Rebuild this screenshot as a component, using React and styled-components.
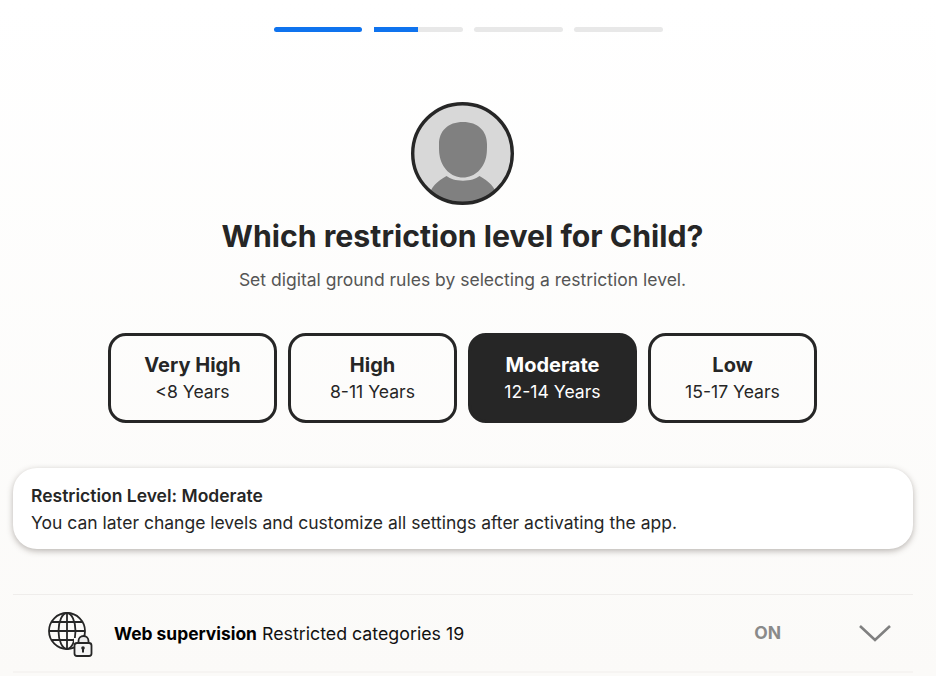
import React from "react"
import styled, { createGlobalStyle } from "styled-components"

const GlobalStyle = createGlobalStyle`
  html, body {
    margin: 0;
    padding: 0;
    height: 100%;
    overflow: hidden;
    font-family: Inter, "Liberation Sans", sans-serif;
  }
  #root { height: 100%; }
`

const levels = [
  { name: "Very High", age: "<8 Years" },
  { name: "High", age: "8-11 Years" },
  { name: "Moderate", age: "12-14 Years", active: true },
  { name: "Low", age: "15-17 Years" },
]

const AvatarIcon = () => (
  <svg width="103" height="103" viewBox="0 0 103 103">
    <defs>
      <clipPath id="avatar-clip">
        <circle cx="51.5" cy="51.5" r="49.5" />
      </clipPath>
    </defs>
    <circle cx="51.5" cy="51.5" r="50" fill="#d8d8d8" />
    <g clipPath="url(#avatar-clip)" fill="#808080">
      <path d="M52 20C67 20 76 29 76 42c0 5 0 8-.5 11C73.500 66 64 75.500 52 75.500S30.500 66 28.500 53c-.5-3-.5-6-.5-11C28 29 37 20 52 20z" />
      <path d="M16 103c1.500-9 3.500-16 8-20.500 3-3 7-6 11.500-8.500 4 2.800 9 4.700 16.500 4.700S64.500 76.800 68.500 74c4.500 2.500 8.500 5.500 11.500 8.500 4.500 4.500 6.500 11.500 8 20.500z" />
    </g>
    <circle cx="51.5" cy="51.5" r="49.800" fill="none" stroke="#262626" strokeWidth="3.400" />
  </svg>
)

const GlobeLockIcon = () => (
  <svg width="46" height="46" viewBox="0 0 46 46" fill="none">
    <g stroke="#262626" strokeWidth="1.800">
      <circle cx="19" cy="19" r="18" />
      <ellipse cx="19" cy="19" rx="8.500" ry="18" />
      <path d="M19 1v36M1 19h36M4 10h30M4 28h30" />
    </g>
    <path d="M26 26h18v19H26z" fill="#fbfaf8" />
    <path d="M30.500 32v-3a5 5 0 0 1 10 0v3" stroke="#262626" strokeWidth="1.800" fill="#ececec" />
    <rect x="26.500" y="31" width="17" height="13" rx="2.500" fill="#f4f4f4" stroke="#262626" strokeWidth="1.800" />
    <circle cx="35" cy="36" r="1.800" fill="#262626" />
    <rect x="34" y="36.500" width="2" height="4" fill="#262626" />
  </svg>
)

const App = () => (
  <Page>
    <GlobalStyle />
    <Progress>
      <Bar $fill={100} />
      <Bar $fill={49.4} $openStart />
      <Bar $fill={0} />
      <Bar $fill={0} />
    </Progress>

    <Avatar><AvatarIcon /></Avatar>
    <Title>Which restriction level for Child?</Title>
    <Subtitle>Set digital ground rules by selecting a restriction level.</Subtitle>

    <Levels>
      {levels.map((l) => (
        <LevelCard key={l.name} $active={l.active}>
          <LevelName>{l.name}</LevelName>
          <LevelAge>{l.age}</LevelAge>
        </LevelCard>
      ))}
    </Levels>

    <Notice>
      <NoticeTitle>Restriction Level: Moderate</NoticeTitle>
      <NoticeText>You can later change levels and customize all settings after activating the app.</NoticeText>
    </Notice>

    <Row>
      <RowIcon><GlobeLockIcon /></RowIcon>
      <RowName>Web supervision</RowName>
      <RowDetail>Restricted categories 19</RowDetail>
      <Status>ON</Status>
      <Chevron>
        <svg width="34" height="20" viewBox="0 0 34 20" fill="none">
          <path d="M2 3l15 14L32 3" stroke="#808080" strokeWidth="2.600" />
        </svg>
      </Chevron>
    </Row>
  </Page>
)

export default App

const Page = styled.div`
  height: 676px;
  width: 936px;
  box-sizing: border-box;
  padding: 27px 24px 0 13px;
  display: flex;
  flex-direction: column;
  align-items: center;
  background: linear-gradient(180deg, #ffffff 0%, #fbfaf8 100%);
  color: #262626;
  overflow: hidden;
`

const Progress = styled.div`
  display: flex;
  gap: 11px;
  margin-left: 12px;
`

const Bar = styled.div`
  width: 89px;
  height: 5px;
  border-radius: ${(p) => (p.$openStart ? "0 3px 3px 0" : "3px")};
  background: ${(p) =>
    `linear-gradient(90deg, #0f73ee ${p.$fill}%, #e8e8e8 ${p.$fill}%)`};

  &:first-child {
    width: 88px;
    margin-right: 1px;
  }
`

const Avatar = styled.div`
  width: 103px;
  height: 103px;
  margin-top: 70px;
`

const Title = styled.h1`
  margin: 11px 0 0;
  font-size: 30.25px;
  line-height: 40px;
  font-weight: 700;
  color: #262626;
`

const Subtitle = styled.p`
  margin: 12px 0 0;
  font-size: 17.5px;
  line-height: 24px;
  color: #555555;
`

const Levels = styled.div`
  display: flex;
  gap: 11px;
  margin-top: 41px;
`

const LevelCard = styled.div`
  box-sizing: border-box;
  width: 169px;
  height: 90px;
  border: 3px solid #262626;
  border-radius: 18px;
  display: flex;
  flex-direction: column;
  align-items: center;
  justify-content: center;
  background: ${(p) => (p.$active ? "#262626" : "transparent")};
  color: ${(p) => (p.$active ? "#ffffff" : "#262626")};
`

const LevelName = styled.div`
  font-size: 20px;
  line-height: 28px;
  font-weight: 700;
`

const LevelAge = styled.div`
  font-size: 17.6px;
  line-height: 26px;
`

const Notice = styled.div`
  box-sizing: border-box;
  align-self: flex-start;
  flex: none;
  width: 900px;
  height: 81px;
  margin-top: 45px;
  padding: 14px 18px;
  border-radius: 24px;
  background: #ffffff;
  box-shadow: 0 2px 6px rgba(60, 50, 40, 0.35);
`

const NoticeTitle = styled.div`
  font-size: 17.5px;
  line-height: 27px;
  font-weight: 600;
  color: #262626;
`

const NoticeText = styled.div`
  font-size: 17.5px;
  line-height: 27px;
  color: #262626;
`

const Row = styled.div`
  box-sizing: border-box;
  align-self: flex-start;
  flex: none;
  width: 900px;
  height: 79px;
  margin-top: 45px;
  display: flex;
  align-items: center;
  border-top: 1px solid #efedeb;
  border-bottom: 2px solid #f6f4f2;
`

const RowIcon = styled.div`
  width: 46px;
  height: 46px;
  margin: 4px 0 0 35px;
  flex: none;
`

const RowName = styled.strong`
  margin-left: 20px;
  font-size: 17.4px;
  font-weight: 700;
  color: #000000;
`

const RowDetail = styled.span`
  margin-left: 5px;
  flex: 1;
  font-size: 17.8px;
  color: #111111;
`

const Status = styled.div`
  font-size: 17.5px;
  font-weight: 700;
  color: #8a8a8a;
  margin: 0 77px 2px 0;
`

const Chevron = styled.div`
  width: 34px;
  height: 20px;
  margin-right: 21px;
`
